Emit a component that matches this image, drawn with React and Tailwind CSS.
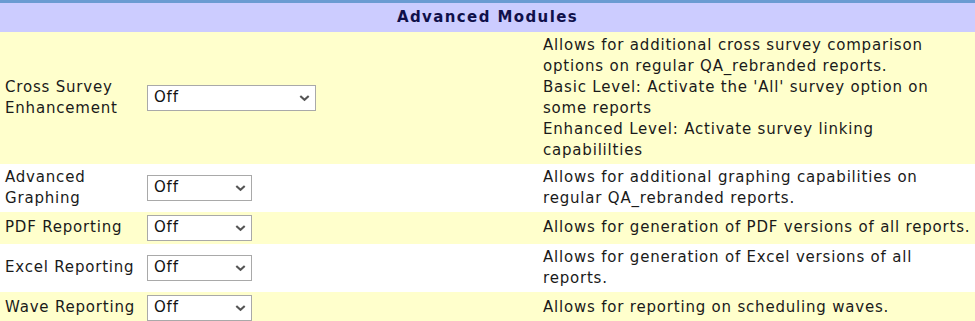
import React from "react";

// module rows
const MODULES = [
  {
    label: ["Cross Survey", "Enhancement"],
    wide: true,
    desc: [
      "Allows for additional cross survey comparison",
      "options on regular QA_rebranded reports.",
      "Basic Level: Activate the 'All' survey option on",
      "some reports",
      "Enhanced Level: Activate survey linking",
      "capabililties",
    ],
  },
  {
    label: ["Advanced", "Graphing"],
    desc: ["Allows for additional graphing capabilities on", "regular QA_rebranded reports."],
  },
  { label: ["PDF Reporting"], desc: ["Allows for generation of PDF versions of all reports."] },
  {
    label: ["Excel Reporting"],
    desc: ["Allows for generation of Excel versions of all", "reports."],
  },
  { label: ["Wave Reporting"], desc: ["Allows for reporting on scheduling waves."] },
];

function Chevron() {
  return (
    <svg width="11" height="7" viewBox="0 0 11 7" className="pointer-events-none absolute right-[6px] top-1/2 -translate-y-1/2">
      <path d="M1.3 1.5 L5.5 5.3 L9.7 1.5" fill="none" stroke="#555" strokeWidth="2.1" />
    </svg>
  );
}

function OffSelect({ wide }) {
  return (
    <div className={`relative h-[26px] ${wide ? "w-[169px]" : "w-[105px]"}`}>
      <select
        defaultValue="off"
        className="h-full w-full appearance-none border border-[#a9a9a9] bg-white pl-[6px] text-[15px] tracking-[0.8px] text-[#111] outline-none"
      >
        <option value="off">Off</option>
        <option value="basic">Basic</option>
        <option value="enhanced">Enhanced</option>
      </select>
      <Chevron />
    </div>
  );
}

export default function App() {
  return (
    <div className="w-[975px] bg-white font-['DejaVu_Sans',Verdana,sans-serif] text-[15px] leading-[21px] tracking-[0.8px] text-[#1a1a1a]">
      <table className="w-full table-fixed border-collapse">
        <colgroup>
          <col className="w-[144px]" />
          <col className="w-[396px]" />
          <col />
        </colgroup>
        <thead>
          <tr>
            <th colSpan={3} className="h-[30px] border-t-[3px] border-[#6b9bd2] bg-[#ccccff] p-0 text-center text-[15px] font-bold tracking-[1.4px] text-[#10104a]">
              Advanced Modules
            </th>
          </tr>
        </thead>
        <tbody>
          {MODULES.map((m, i) => (
            <tr key={i} className={i % 2 === 0 ? "bg-[#ffffcc]" : "bg-white"}>
              <td className="py-[3px] pl-[5px] pr-[2px] align-middle">
                {m.label.map((l) => (
                  <div key={l} className="whitespace-nowrap">{l}</div>
                ))}
              </td>
              <td className="py-[3px] pl-[3px] align-middle">
                <OffSelect wide={m.wide} />
              </td>
              <td className="py-[3px] pl-[3px] align-middle">
                {m.desc.map((d) => (
                  <div key={d} className="whitespace-nowrap">{d}</div>
                ))}
              </td>
            </tr>
          ))}
        </tbody>
      </table>
    </div>
  );
}
